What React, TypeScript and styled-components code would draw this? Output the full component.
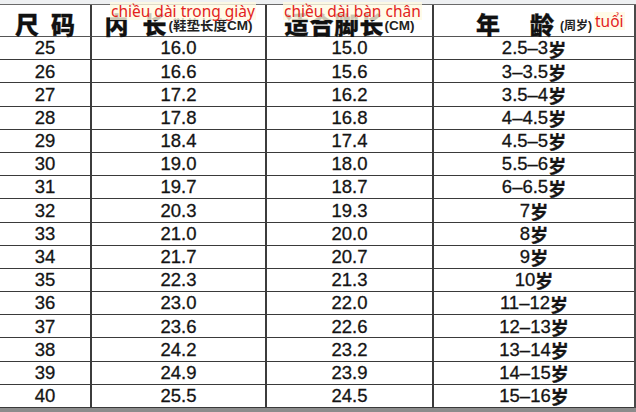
import React from 'react';
import styled, { createGlobalStyle } from 'styled-components';

const GlobalStyle = createGlobalStyle`
  html, body {
    margin: 0;
    padding: 0;
    background: #ececec;
  }
  body {
    font-family: 'Liberation Sans', Arial, 'Noto Sans CJK SC', sans-serif;
  }
`;

const Page = styled.div`
  position: relative;
  width: 636px;
  height: 412px;
  overflow: hidden;
  background: #f6f6f6;
`;

const TopStrip = styled.div`
  height: 4px;
  background: #eef0f2;
  border-bottom: 1px solid #6a6a6a;
`;

const Table = styled.div`
  display: grid;
  grid-template-columns: 92px 175px 167px 200px;
  grid-template-rows: 32px repeat(16, 23.2px);
  width: 634px;
  background: #ffffff;
  border-right: 2px solid #4a4a4a;
`;

const Cell = styled.div<{ $last?: boolean; $head?: boolean }>`
  display: flex;
  align-items: center;
  justify-content: center;
  box-sizing: border-box;
  padding-top: ${(p) => (p.$head ? '6px' : '1px')};
  border-bottom: 1px solid ${(p) => (p.$head ? '#555' : '#3a3a3a')};
  border-right: ${(p) => (p.$last ? 'none' : '2px solid #3c3c3c')};
  color: #141414;
  font-size: 18.5px;
  line-height: 1;
  white-space: nowrap;
  -webkit-text-stroke: 0.3px #141414;
`;

const HeadBig = styled.span<{ $gap?: number }>`
  font-family: 'Noto Sans CJK SC', sans-serif;
  font-weight: 900;
  font-size: 24px;
  color: #111;
  letter-spacing: ${(p) => p.$gap ?? 0}px;
  margin-right: ${(p) => -(p.$gap ?? 0)}px;
`;

const HeadSmall = styled.span<{ $left?: number; $size?: number }>`
  font-family: 'Liberation Sans', 'Noto Sans CJK SC', sans-serif;
  font-weight: 700;
  font-size: ${(p) => p.$size ?? 13.5}px;
  color: #222;
  margin-top: 5px;
  margin-left: ${(p) => p.$left ?? 0}px;
  -webkit-text-stroke: 0;
`;

const Age = styled.span`
  font-family: 'Liberation Sans', 'Noto Sans CJK SC', sans-serif;
`;

const AgeUnit = styled.span`
  font-family: 'Noto Sans CJK SC', sans-serif;
  font-weight: 700;
  font-size: 18px;
`;

const BottomStrip = styled.div`
  height: 4px;
  background: #8c8c8c;
`;

const Note = styled.span<{ $x: number; $y: number }>`
  position: absolute;
  left: ${(p) => p.$x}px;
  top: ${(p) => p.$y}px;
  padding: 0 1px;
  background: rgba(255, 250, 225, 0.78);
  color: #e3231c;
  font-family: 'Noto Sans', 'Open Sans', sans-serif;
  font-size: 15.5px;
  line-height: 18px;
`;

const rows: [string, string, string, string][] = [
  ['25', '16.0', '15.0', '2.5–3'],
  ['26', '16.6', '15.6', '3–3.5'],
  ['27', '17.2', '16.2', '3.5–4'],
  ['28', '17.8', '16.8', '4–4.5'],
  ['29', '18.4', '17.4', '4.5–5'],
  ['30', '19.0', '18.0', '5.5–6'],
  ['31', '19.7', '18.7', '6–6.5'],
  ['32', '20.3', '19.3', '7'],
  ['33', '21.0', '20.0', '8'],
  ['34', '21.7', '20.7', '9'],
  ['35', '22.3', '21.3', '10'],
  ['36', '23.0', '22.0', '11–12'],
  ['37', '23.6', '22.6', '12–13'],
  ['38', '24.2', '23.2', '13–14'],
  ['39', '24.9', '23.9', '14–15'],
  ['40', '25.5', '24.5', '15–16'],
];

export default function App() {
  return (
    <Page>
      <GlobalStyle />
      <TopStrip />
      <Table>
        <Cell $head>
          <HeadBig $gap={12}>尺码</HeadBig>
        </Cell>
        <Cell $head>
          <HeadBig $gap={14}>内长</HeadBig>
          <HeadSmall $left={2}>(鞋垫长度CM)</HeadSmall>
        </Cell>
        <Cell $head>
          <HeadBig $gap={1}>适合脚长</HeadBig>
          <HeadSmall $left={1}>(CM)</HeadSmall>
        </Cell>
        <Cell $head $last>
          <HeadBig $gap={30}>年龄</HeadBig>
          <HeadSmall $left={6} $size={12}>(周岁)</HeadSmall>
        </Cell>
        {rows.map(([size, inner, foot, age]) => (
          <React.Fragment key={size}>
            <Cell>{size}</Cell>
            <Cell>{inner}</Cell>
            <Cell>{foot}</Cell>
            <Cell $last>
              <Age>{age}</Age>
              <AgeUnit>岁</AgeUnit>
            </Cell>
          </React.Fragment>
        ))}
      </Table>
      <BottomStrip />
      <Note $x={110} $y={2}>chiều dài trong giày</Note>
      <Note $x={283} $y={2}>chiều dài bàn chân</Note>
      <Note $x={594} $y={12}>tuổi</Note>
    </Page>
  );
}
